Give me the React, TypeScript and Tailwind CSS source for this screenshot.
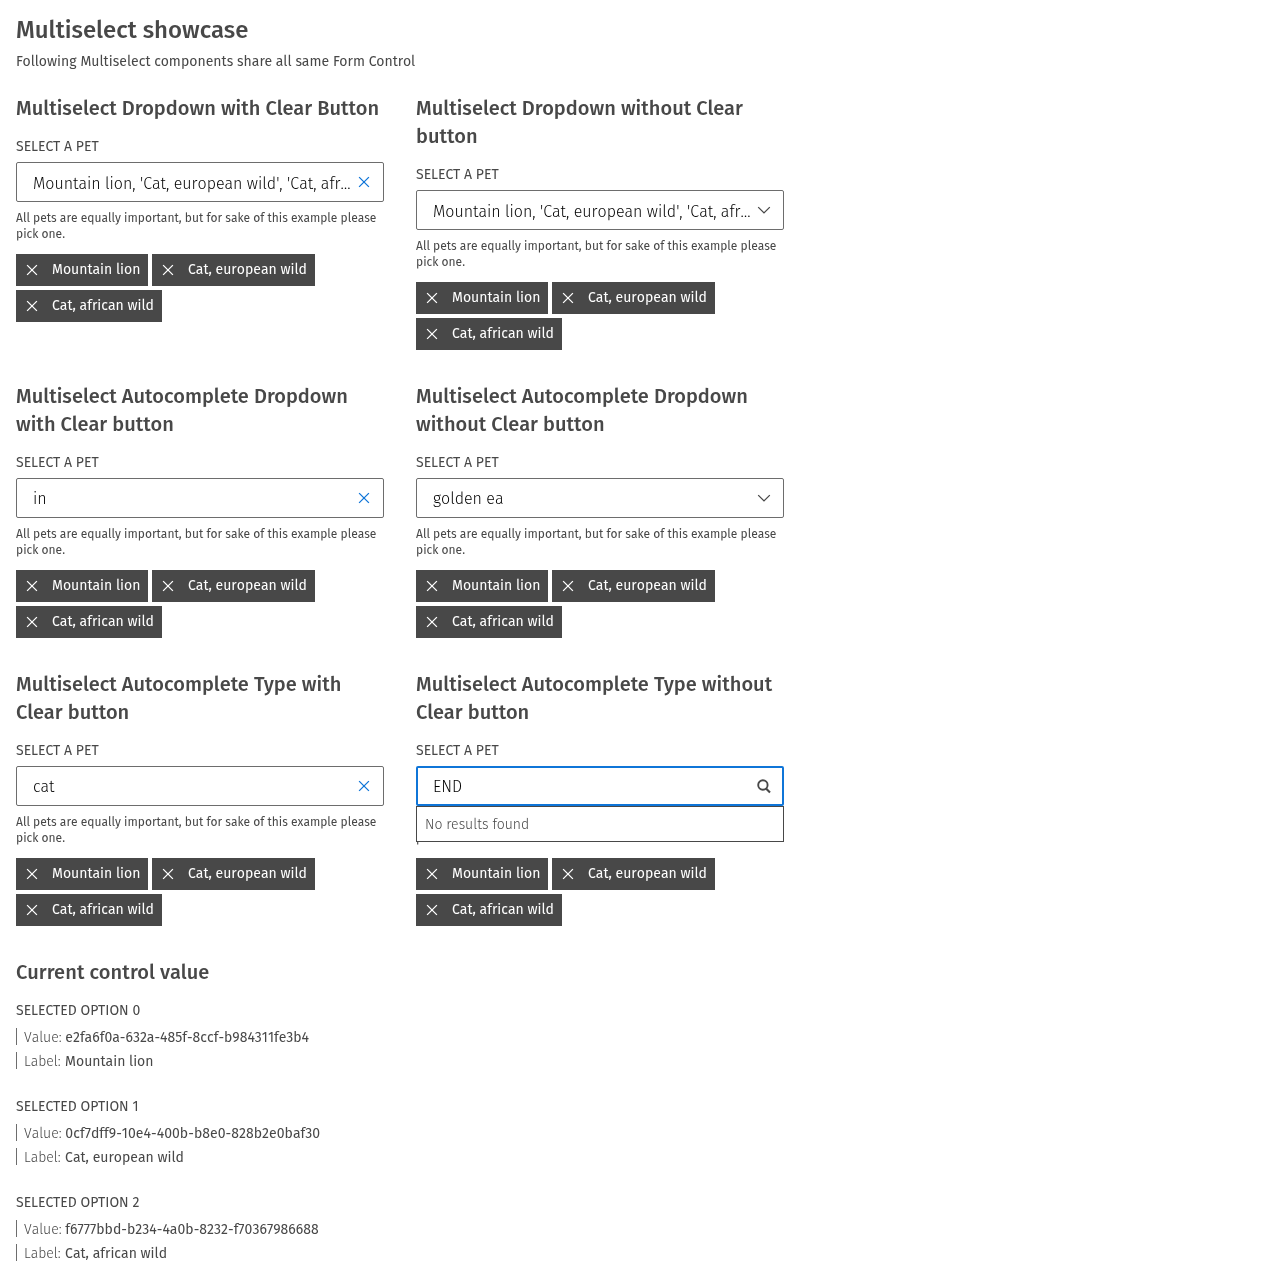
type Icon = 'clear' | 'chevron' | 'search';

type Field = {
  title: string;
  value: string;
  icon: Icon;
  dropdown?: boolean;
  open?: boolean;
};

const SELECTED = "Mountain lion, 'Cat, european wild', 'Cat, afr…";

const FIELDS: Field[] = [
  { title: 'Multiselect Dropdown with Clear Button', value: SELECTED, icon: 'clear', dropdown: true },
  { title: 'Multiselect Dropdown without Clear button', value: SELECTED, icon: 'chevron', dropdown: true },
  { title: 'Multiselect Autocomplete Dropdown with Clear button', value: 'in', icon: 'clear' },
  { title: 'Multiselect Autocomplete Dropdown without Clear button', value: 'golden ea', icon: 'chevron' },
  { title: 'Multiselect Autocomplete Type with Clear button', value: 'cat', icon: 'clear' },
  { title: 'Multiselect Autocomplete Type without Clear button', value: 'END', icon: 'search', open: true },
];

const CHIPS = [
  { label: 'Mountain lion', width: 'w-[132px]' },
  { label: 'Cat, european wild', width: 'w-[163px]' },
  { label: 'Cat, african wild', width: 'w-[146px]' },
];

const OPTIONS = [
  { value: 'e2fa6f0a-632a-485f-8ccf-b984311fe3b4', label: 'Mountain lion', tracking: '' },
  { value: '0cf7dff9-10e4-400b-b8e0-828b2e0baf30', label: 'Cat, european wild', tracking: 'tracking-[0.04px]' },
  { value: 'f6777bbd-b234-4a0b-8232-f70367986688', label: 'Cat, african wild', tracking: 'tracking-[0.02px]' },
];

function Cross({ className }: { className: string }) {
  return (
    <svg viewBox="0 0 16 16" className={`size-4 shrink-0 ${className}`} fill="none" stroke="currentColor">
      <path d="M3.1 3.1 12.9 12.9M12.9 3.1 3.1 12.9" strokeWidth="1.3" />
    </svg>
  );
}

function FieldIcon({ icon }: { icon: Icon }) {
  if (icon === 'clear') return <Cross className="mt-[11px] text-[#0f75d8]" />;
  if (icon === 'chevron') {
    return (
      <svg viewBox="0 0 16 16" className="mt-[11px] size-4 shrink-0 text-[#484848]" fill="none" stroke="currentColor">
        <path d="M2.2 5.1 8 10.9l5.8-5.8" strokeWidth="1.3" />
      </svg>
    );
  }
  return (
    <svg viewBox="0 0 16 16" className="mt-[11px] size-4 shrink-0 text-[#484848]" fill="none" stroke="currentColor">
      <circle cx="6.9" cy="7" r="4.7" strokeWidth="1.9" />
      <path d="m10 10.4 4 4" strokeWidth="2.1" />
    </svg>
  );
}

function Multiselect({ field }: { field: Field }) {
  return (
    <section className="w-[368px]">
      <h2 className="text-[20px] leading-7 font-medium tracking-[0.025px]">{field.title}</h2>
      <div className="mt-[17px] text-[14px] leading-4">SELECT A PET</div>
      <div className="relative mt-[7px]">
        <div
          className={
            field.open
              ? 'flex h-10 justify-between rounded-[2px] border-2 border-[#0f75d8] pr-[10px] pl-[15px]'
              : 'flex h-10 justify-between rounded-[2px] border border-[#6d6d6d] pr-[11px] pl-4'
          }
        >
          <span
            className={`whitespace-nowrap text-[16px] font-light tracking-[-0.02px] text-black [font-kerning:none] ${field.open ? 'leading-[36px]' : 'leading-[38px]'} ${field.dropdown ? 'pt-0.5' : 'pt-px'}`}
          >
            {field.value}
          </span>
          <div className={field.open ? '-mt-px' : ''}>
            <FieldIcon icon={field.icon} />
          </div>
        </div>
        {field.open && (
          <div className="absolute inset-x-0 top-full h-9 border border-[#484848] bg-white pt-px pl-2 text-[14px] leading-[34px] font-light text-[#484848]">
            No results found
          </div>
        )}
      </div>
      <p className="mt-2 text-[12px] leading-4 [font-kerning:none]">
        All pets are equally important, but for sake of this example please pick one.
      </p>
      <div className="mt-3 flex flex-wrap gap-1">
        {CHIPS.map((chip) => (
          <div
            key={chip.label}
            className={`flex h-8 bg-[#484848] pl-2 text-[14px] leading-[32px] text-white [font-kerning:none] ${chip.width}`}
          >
            <Cross className="mt-2" />
            <span className="ml-3 whitespace-nowrap">{chip.label}</span>
          </div>
        ))}
      </div>
    </section>
  );
}

export default function App() {
  return (
    <main
      className="h-[1282px] overflow-hidden px-4 pt-[14px] text-[#484848] will-change-transform"
      style={{ fontFamily: '"Fira Sans", "Noto Sans", sans-serif' }}
    >
      <h1 className="text-[24px] leading-8 font-medium">Multiselect showcase</h1>
      <p className="mt-1 text-[14px] leading-6 tracking-[0.033px]">
        Following Multiselect components share all same Form Control
      </p>
      <div className="mt-5 grid grid-cols-[368px_368px] gap-8">
        {FIELDS.map((field) => (
          <Multiselect key={field.title} field={field} />
        ))}
      </div>
      <h2 className="mt-8 text-[20px] leading-7 font-medium tracking-[0.09px]">Current control value</h2>
      <div className="mt-[17px] flex flex-col gap-8">
        {OPTIONS.map((option, i) => (
          <div key={option.value} className="h-16">
            <div className="text-[14px] leading-4">SELECTED OPTION {i}</div>
            <div className="mt-[9px] h-[17px] border-l border-[#6d6d6d] pl-[7px] text-[14px] leading-[19px] [font-kerning:none]">
              <span className="font-light">Value:</span> <span className={option.tracking}>{option.value}</span>
            </div>
            <div className="mt-[7px] h-[17px] border-l border-[#6d6d6d] pl-[7px] text-[14px] leading-[19px] [font-kerning:none]">
              <span className="mr-[0.7px] font-light">Label:</span> {option.label}
            </div>
          </div>
        ))}
      </div>
    </main>
  );
}
